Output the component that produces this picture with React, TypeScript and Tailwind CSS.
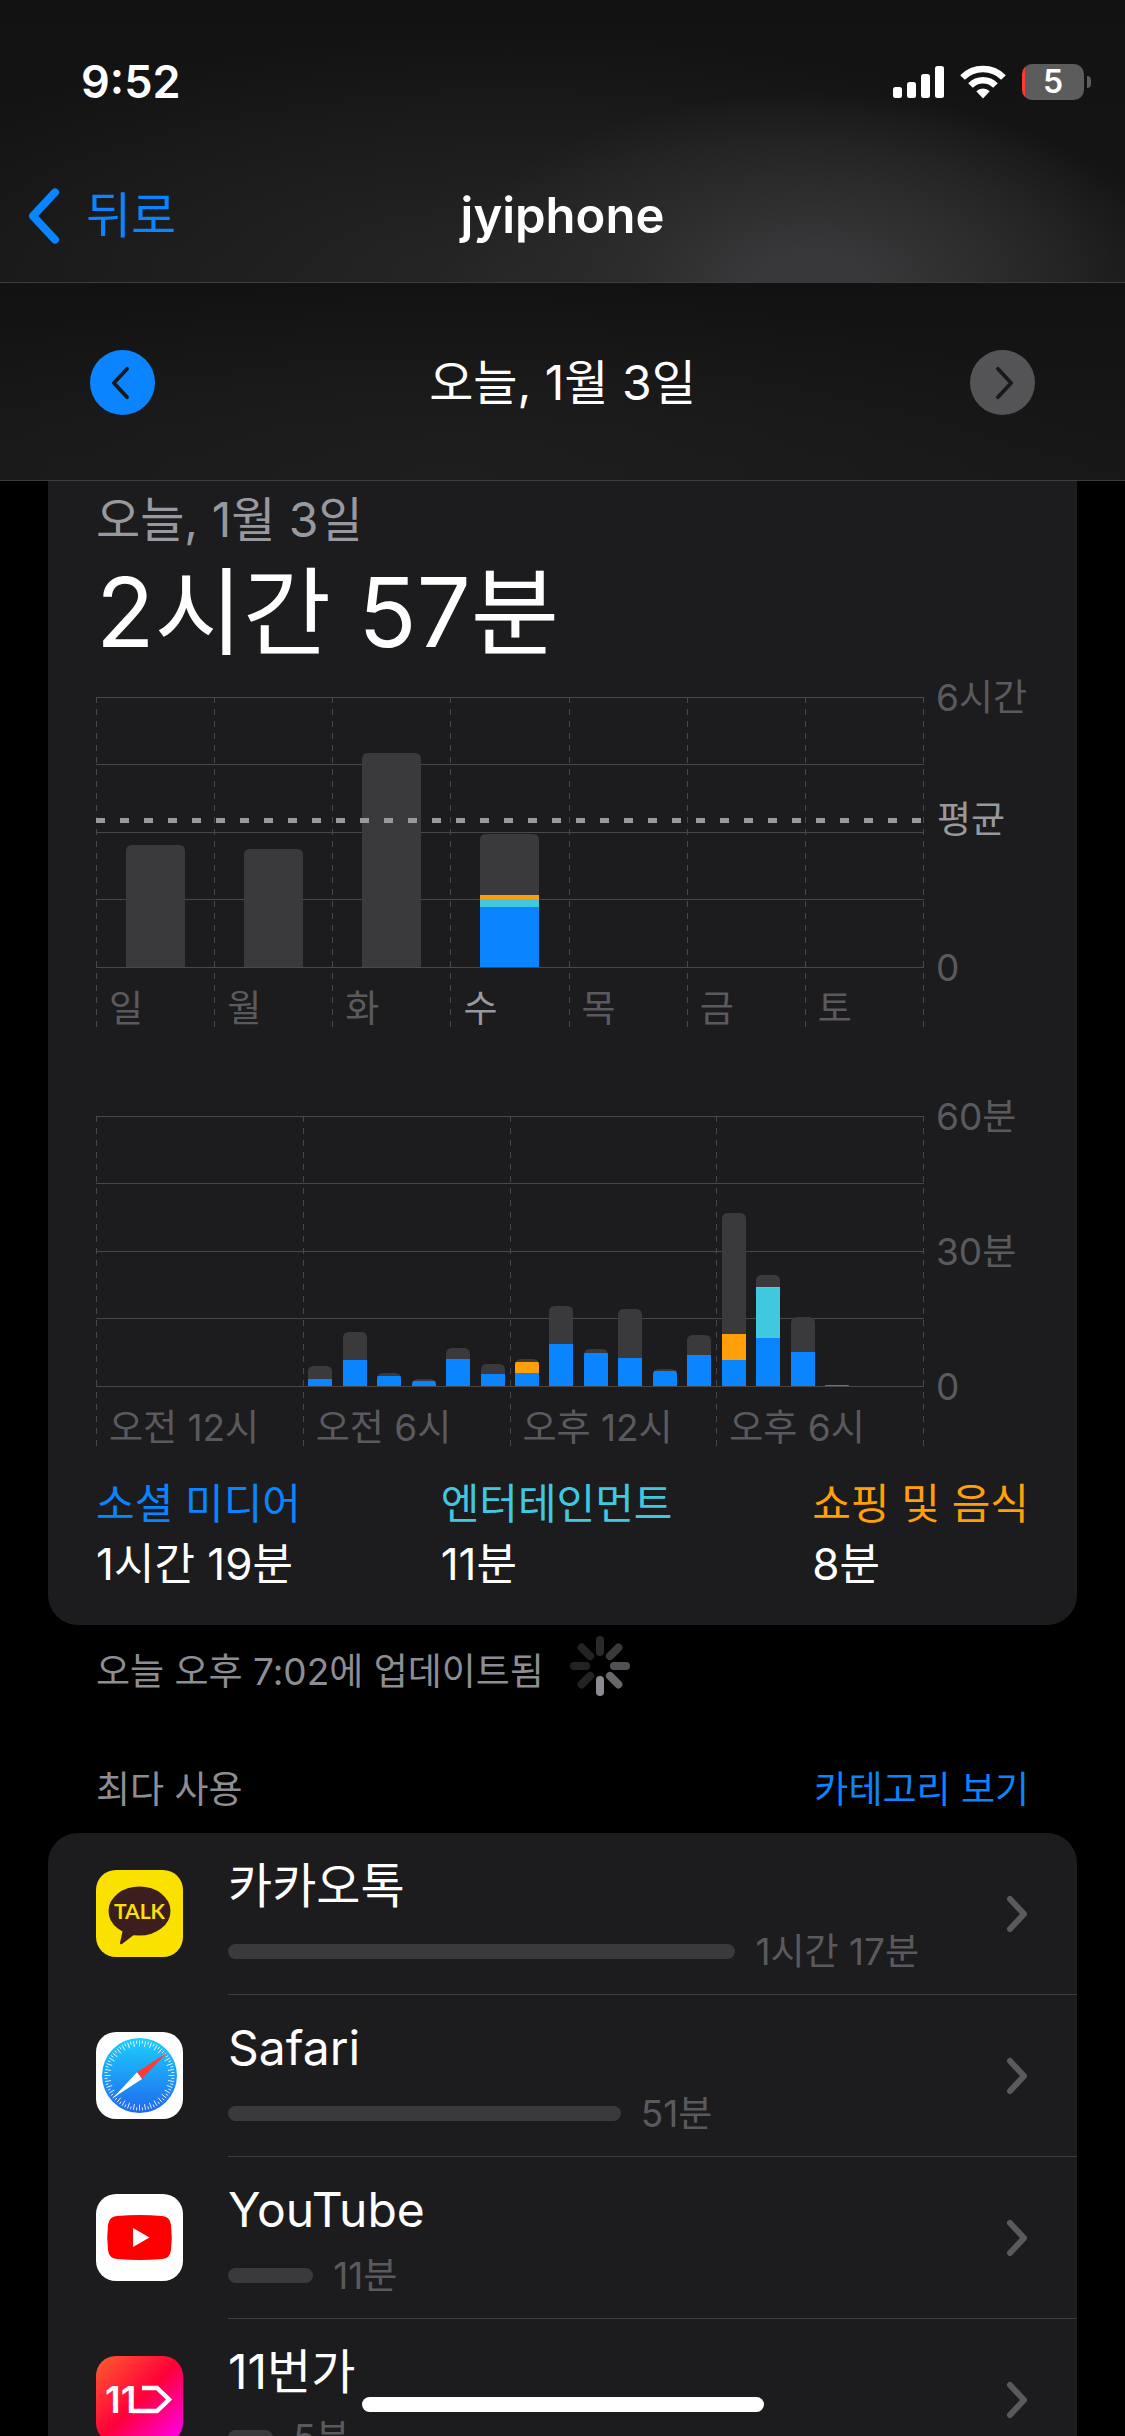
import type { ReactNode } from "react";

interface Bar {
  slot: number;
  total: number;
  shopping?: number;
  entertainment?: number;
  social?: number;
}

interface AppUsage {
  name: string;
  time: string;
  percent: number;
  icon: ReactNode;
}

const PLOT_WIDTH = 827;
const PLOT_HEIGHT = 270;

const colors = {
  other: "#3a3a3c",
  shopping: "#ff9f0a",
  entertainment: "#40c8e0",
  social: "#0a84ff",
};

const days = ["일", "월", "화", "수", "목", "금", "토"];
const hours = ["오전 12시", "오전 6시", "오후 12시", "오후 6시"];

// Bar values are cumulative heights measured from the baseline
const weekBars: Bar[] = [
  { slot: 0, total: 122 },
  { slot: 1, total: 118 },
  { slot: 2, total: 214 },
  { slot: 3, total: 133, shopping: 72, entertainment: 68, social: 60 },
];

const hourBars: Bar[] = [
  { slot: 6, total: 20, social: 7 },
  { slot: 7, total: 54, social: 26 },
  { slot: 8, total: 13, social: 10 },
  { slot: 9, total: 7, social: 5 },
  { slot: 10, total: 38, social: 27 },
  { slot: 11, total: 22, social: 12 },
  { slot: 12, total: 27, shopping: 24, social: 13 },
  { slot: 13, total: 80, social: 42 },
  { slot: 14, total: 37, social: 33 },
  { slot: 15, total: 77, social: 28 },
  { slot: 16, total: 17, social: 15 },
  { slot: 17, total: 51, social: 31 },
  { slot: 18, total: 173, shopping: 52, social: 26 },
  { slot: 19, total: 111, shopping: 99, entertainment: 98, social: 48 },
  { slot: 20, total: 69, social: 34 },
  { slot: 21, total: 1, social: 1 },
];

const categories = [
  { name: "소셜 미디어", time: "1시간 19분", color: "text-[#0a84ff]" },
  { name: "엔터테인먼트", time: "11분", color: "text-[#40c8e0]" },
  { name: "쇼핑 및 음식", time: "8분", color: "text-[#ff9f0a]" },
];

function Chevron({ className, flip = false, width = 7 }: { className: string; flip?: boolean; width?: number }) {
  return (
    <svg viewBox="0 0 22 38" className={className} fill="none" aria-hidden="true">
      <path
        d={flip ? "M18 4 L4 19 L18 34" : "M4 4 L18 19 L4 34"}
        stroke="currentColor"
        strokeWidth={width}
        strokeLinecap="round"
        strokeLinejoin="round"
      />
    </svg>
  );
}

function BarShape({ bar, id, step, inset, width }: { bar: Bar; id: string; step: number; inset: number; width: number }) {
  const x = Math.round(bar.slot * step + inset);
  const top = PLOT_HEIGHT - bar.total;
  const radius = Math.min(6, bar.total);
  const clip = `${id}-${bar.slot}`;
  return (
    <g clipPath={`url(#${clip})`}>
      <clipPath id={clip}>
        <path
          d={`M${x} ${PLOT_HEIGHT} V${top + radius} Q${x} ${top} ${x + radius} ${top} H${x + width - radius} Q${x + width} ${top} ${x + width} ${top + radius} V${PLOT_HEIGHT} Z`}
        />
      </clipPath>
      <rect x={x} y={top} width={width} height={bar.total} fill={colors.other} />
      {(["shopping", "entertainment", "social"] as const).map((key) => {
        const height = bar[key];
        return height ? (
          <rect key={key} x={x} y={PLOT_HEIGHT - height} width={width} height={height} fill={colors[key]} />
        ) : null;
      })}
    </g>
  );
}

interface ChartProps {
  id: string;
  title: string;
  labels: string[];
  activeLabel?: number;
  bars: Bar[];
  slots: number;
  inset: number;
  barWidth: number;
  scale: { label: string; y: number }[];
  average?: number;
}

function Chart({ id, title, labels, activeLabel, bars, slots, inset, barWidth, scale, average }: ChartProps) {
  const column = PLOT_WIDTH / labels.length;
  return (
    <svg viewBox="0 0 933 332" className="w-full overflow-visible text-[37px]" role="img" aria-label={title}>
      {[0, 67, 135, 202, 270].map((y) => (
        <rect key={y} x="0" y={y} width={PLOT_WIDTH + 1} height="1" fill="#48484a" />
      ))}
      {[...labels, ""].map((_, i) => {
        const x = Math.round(i * column) + 0.5;
        return <path key={i} d={`M${x} 0 V331`} stroke="#48484a" strokeDasharray="6 6" />;
      })}
      {bars.map((bar) => (
        <BarShape key={bar.slot} id={id} bar={bar} step={PLOT_WIDTH / slots} inset={inset} width={barWidth} />
      ))}
      {average !== undefined && (
        <>
          <path d={`M0 ${average} H${PLOT_WIDTH}`} stroke="#98989d" strokeWidth="5" strokeDasharray="9 15" />
          <text x="841" y={average + 12} fill="#98989d">
            평균
          </text>
        </>
      )}
      {labels.map((label, i) => (
        <text key={label} x={i * column + 13} y="325" fill={i === activeLabel ? "#98989d" : "#5a5a5e"}>
          {label}
        </text>
      ))}
      {scale.map(({ label, y }) => (
        <text key={label} x="840" y={y + 14} fill="#5a5a5e">
          {label}
        </text>
      ))}
    </svg>
  );
}

function KakaoIcon() {
  return (
    <svg viewBox="0 0 87 87" className="size-full" aria-hidden="true">
      <rect width="87" height="87" rx="20" fill="#fae100" />
      <ellipse cx="43.5" cy="41" rx="31" ry="24.5" fill="#3c1e1e" />
      <path d="M27 59 L24 73 Q24 75 26 74 L39 64 Z" fill="#3c1e1e" />
      <text x="43.5" y="49" textAnchor="middle" fill="#fae100" className="font-['Lato',sans-serif] text-[21px] font-bold">
        TALK
      </text>
    </svg>
  );
}

function SafariIcon() {
  return (
    <svg viewBox="0 0 87 87" className="size-full" aria-hidden="true">
      <defs>
        <linearGradient id="safari" x1="0" y1="0" x2="0" y2="1">
          <stop offset="0" stopColor="#1dcffc" />
          <stop offset="1" stopColor="#1f68f0" />
        </linearGradient>
      </defs>
      <rect width="87" height="87" rx="20" fill="#fff" />
      <circle cx="43.5" cy="43.5" r="37.5" fill="url(#safari)" />
      {Array.from({ length: 72 }, (_, i) => (
        <path
          key={i}
          d={i % 2 === 0 ? "M43.5 8.5 V14.5" : "M43.5 8.5 V11.5"}
          stroke="#fff"
          strokeWidth="0.8"
          transform={`rotate(${i * 5} 43.5 43.5)`}
        />
      ))}
      <path d="M70.5 21 L41 40.3 L46 47 Z" fill="#ff3b30" />
      <path d="M17 66 L41 40.3 L46 47 Z" fill="#fff" />
    </svg>
  );
}

function YouTubeIcon() {
  return (
    <svg viewBox="0 0 87 87" className="size-full" aria-hidden="true">
      <rect width="87" height="87" rx="20" fill="#fff" />
      <path
        d="M21 22 Q43.5 20 66 22 Q74 22.5 75 31 Q76.5 43.5 75 56 Q74 64.5 66 65 Q43.5 67 21 65 Q13 64.5 12 56 Q10.5 43.5 12 31 Q13 22.5 21 22 Z"
        fill="#f00"
      />
      <path d="M37 34 L53.5 43.5 L37 53 Z" fill="#fff" />
    </svg>
  );
}

function ElevenStreetIcon() {
  return (
    <svg viewBox="0 0 87 87" className="size-full" aria-hidden="true">
      <defs>
        <linearGradient id="eleven" x1="0" y1="0" x2="1" y2="1">
          <stop offset="0.05" stopColor="#ff5530" />
          <stop offset="0.5" stopColor="#ff0038" />
          <stop offset="0.9" stopColor="#ff00d4" />
        </linearGradient>
      </defs>
      <rect width="87" height="87" rx="20" fill="url(#eleven)" />
      <text x="9" y="57" fill="#fff" className="font-['Inter',sans-serif] text-[37px] font-semibold">
        11
      </text>
      <path d="M46 32 H61 L73 43.5 L61 55 H36" fill="none" stroke="#fff" strokeWidth="4.5" />
    </svg>
  );
}

const apps: AppUsage[] = [
  { name: "카카오톡", time: "1시간 17분", percent: 67.3, icon: <KakaoIcon /> },
  { name: "Safari", time: "51분", percent: 52.1, icon: <SafariIcon /> },
  { name: "YouTube", time: "11분", percent: 11.3, icon: <YouTubeIcon /> },
  { name: "11번가", time: "5분", percent: 6, icon: <ElevenStreetIcon /> },
];

function StatusBar() {
  return (
    <div className="flex items-center justify-between pr-[34px] pl-[81px] pt-[52px]">
      <span className="text-[45px] leading-[60px] font-semibold">9:52</span>
      <div className="flex items-center gap-4">
        <svg viewBox="0 0 51 32" className="h-8 w-[51px]" fill="#fff" aria-hidden="true">
          <rect x="0" y="21" width="9" height="11" rx="2.5" />
          <rect x="14" y="16" width="9" height="16" rx="2.5" />
          <rect x="28" y="8" width="9" height="24" rx="2.5" />
          <rect x="42" y="0" width="9" height="32" rx="2.5" />
        </svg>
        <svg viewBox="0 0 46 34" className="h-[34px] w-[46px]" aria-hidden="true">
          <g fill="none" stroke="#fff" strokeWidth="6.5">
            <path d="M2.5 12.5 A29 29 0 0 1 43.5 12.5" />
            <path d="M10.5 20.5 A17.7 17.7 0 0 1 35.5 20.5" />
          </g>
          <path d="M16.3 26.3 A9.5 9.5 0 0 1 29.7 26.3 L23 33.5 Z" fill="#fff" />
        </svg>
        <div className="flex items-center gap-[3px]">
          <div className="flex h-9 w-[62px] items-center justify-center rounded-[10px] bg-[linear-gradient(to_right,#ff3b30_3px,#5c5c5d_3px)] text-[32px] leading-9 font-semibold">
            5
          </div>
          <div className="h-3 w-1 rounded-r-full bg-[#5c5c5d]" />
        </div>
      </div>
    </div>
  );
}

function Spinner() {
  const shades = ["#2a2a2c", "#3a3a3c", "#515154", "#68686c", "#8a8a8f", "#232325", "#232325", "#232325"];
  return (
    <svg viewBox="0 0 60 60" className="size-[60px]" role="img" aria-label="업데이트 중">
      {shades.map((shade, i) => (
        <rect key={i} x="26" y="0" width="8" height="20" rx="4" fill={shade} transform={`rotate(${i * 45} 30 30)`} />
      ))}
    </svg>
  );
}

export default function App() {
  return (
    <div className="flex h-screen flex-col overflow-hidden bg-black font-['Inter','Noto_Sans_CJK_KR',sans-serif] text-white">
      <header className="shrink-0">
        <div className="border-b border-[#3d3d3f] bg-[radial-gradient(ellipse_360px_190px_at_72%_100%,#38383a_15%,#2c2c2d_50%,transparent),radial-gradient(ellipse_60%_90%_at_45%_100%,#262627,transparent),linear-gradient(#121212,#161616)]">
          <StatusBar />
          <div className="grid grid-cols-[1fr_auto_1fr] items-center px-[26px] pt-[74px] pb-[36px]">
            <a href="#back" className="flex items-center gap-6 text-[#0a84ff]">
              <Chevron flip width={5} className="h-[60px] w-[36px]" />
              <span className="text-[49px] leading-[60px]">뒤로</span>
            </a>
            <h1 className="text-[49px] leading-[60px] font-semibold">jyiphone</h1>
          </div>
        </div>
        <div className="flex items-center justify-between border-b border-[#3d3d3f] bg-[radial-gradient(ellipse_60%_100%_at_40%_100%,#1e1e1f,transparent),linear-gradient(#121212,#181818)] px-[90px] pt-[67px] pb-[65px]">
          <button aria-label="이전 날" className="flex size-[65px] items-center justify-center rounded-full bg-[#0a84ff] pr-1 text-[#17191c]">
            <Chevron flip width={4} className="h-9 w-[21px]" />
          </button>
          <span className="text-[48px] leading-[60px]">오늘, 1월 3일</span>
          <button aria-label="다음 날" className="flex size-[65px] items-center justify-center rounded-full bg-[#545456] pl-1 text-[#17191c]">
            <Chevron width={4} className="h-9 w-[21px]" />
          </button>
        </div>
      </header>

      <main className="min-h-0 flex-1 overflow-hidden px-12">
        <section className="rounded-b-[30px] bg-[#1c1c1e] px-12 pt-[9px] pb-[31px]">
          <p className="text-[48px] leading-[60px] text-[#98989f]">오늘, 1월 3일</p>
          <p className="mt-1.5 text-[96px] leading-[112px]">2시간 57분</p>
          <div className="mt-[29px] flex flex-col gap-[87px]">
            <Chart
              id="week"
              title="주간 사용 시간"
              labels={days}
              activeLabel={3}
              bars={weekBars}
              slots={7}
              inset={30}
              barWidth={59}
              scale={[
                { label: "6시간", y: 0 },
                { label: "0", y: 270 },
              ]}
              average={123.5}
            />
            <Chart
              id="day"
              title="시간대별 사용 시간"
              labels={hours}
              bars={hourBars}
              slots={24}
              inset={5.5}
              barWidth={24}
              scale={[
                { label: "60분", y: 0 },
                { label: "30분", y: 135 },
                { label: "0", y: 270 },
              ]}
            />
          </div>
          <dl className="mt-[26px] flex justify-between leading-[60px]">
            {categories.map((category) => (
              <div key={category.name}>
                <dt className={`text-[42px] ${category.color}`}>{category.name}</dt>
                <dd className="text-[44px]">{category.time}</dd>
              </div>
            ))}
          </dl>
        </section>

        <div className="mt-[11px] flex items-end gap-[26px] px-12 text-[37px] leading-[48px] text-[#8d8d93]">
          <p>오늘 오후 7:02에 업데이트됨</p>
          <Spinner />
        </div>

        <div className="mt-[68px] flex justify-between px-12 text-[37px] leading-[52px]">
          <h2 className="text-[#8d8d93]">최다 사용</h2>
          <a href="#categories" className="text-[#0a84ff]">
            카테고리 보기
          </a>
        </div>

        <ul className="mt-[17px] rounded-[30px] bg-[#1c1c1e]">
          {apps.map((app) => (
            <li key={app.name}>
              <a href="#app" className="flex h-[162px] items-center gap-[45px] pl-12">
                <div className="mb-px size-[87px] shrink-0">{app.icon}</div>
                <div className="flex h-full flex-1 items-center border-b border-[#3d3d3f] pr-[49px]">
                  <div className="flex-1 pt-1">
                    <p className="text-[48px] leading-[72px]">{app.name}</p>
                    <div className="flex items-center gap-5 pr-6 text-[37px] leading-[60px] whitespace-nowrap text-[#5a5a5e]">
                      <div className="h-[15px] shrink-0 rounded-full bg-[#3a3a3c]" style={{ width: `${app.percent}%` }} />
                      <span>{app.time}</span>
                    </div>
                  </div>
                  <Chevron width={6} className="h-[38px] w-[22px] text-[#5a5a5e]" />
                </div>
              </a>
            </li>
          ))}
        </ul>
      </main>

      <div className="fixed bottom-6 left-1/2 h-[15px] w-[402px] -translate-x-1/2 rounded-full bg-white" />
    </div>
  );
}
